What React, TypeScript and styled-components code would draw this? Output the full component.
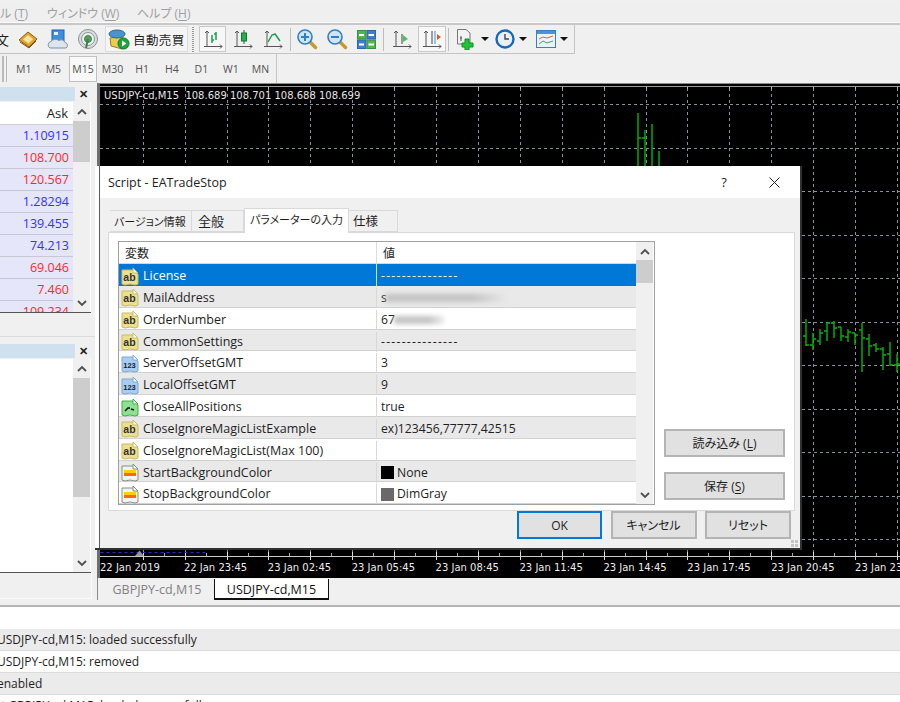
import * as React from "react";
import styled, { createGlobalStyle } from "styled-components";

const UI_FONT = `"Open Sans", "Noto Sans CJK JP", sans-serif`;

const GlobalStyle = createGlobalStyle`
  html, body {
    margin: 0;
    padding: 0;
    background: #f0f0f0;
    font-family: ${UI_FONT};
  }
`;

/* Small drawings used in the toolbars */
const BookIcon = () => (
  <svg width="20" height="20" viewBox="0 0 20 20">
    <path d="M1 11 L10 3 L19 10 L11 18 Z" fill="#e0a52c" stroke="#8a5a12" />
    <path d="M5 10.5 L10 6 L15 10 L10.5 14.5 Z" fill="#f7e2a0" />
    <path d="M2 13 L11 19 L18 12" fill="none" stroke="#7a4d10" />
  </svg>
);

const CloudIcon = () => (
  <svg width="22" height="22" viewBox="0 0 22 22">
    <rect x="5" y="2" width="12" height="11" fill="#3f8fdc" stroke="#1f5fa8" />
    <rect x="7" y="4" width="4" height="3" fill="#dff0ff" />
    <path d="M3 20 a3.5 3.5 0 0 1 1-6.5 a5 4 0 0 1 8-1 a4 4 0 0 1 6 2 a3 3 0 0 1 1 5.5 Z" fill="#dde6f0" stroke="#7d8fa5" />
  </svg>
);

const SignalIcon = () => (
  <svg width="22" height="22" viewBox="0 0 22 22">
    <circle cx="11" cy="11" r="9.5" fill="#d8dde0" stroke="#8b9296" />
    <circle cx="11" cy="11" r="6.5" fill="#eef2f2" stroke="#8b9296" />
    <circle cx="11" cy="11" r="3.5" fill="#5a9f5a" stroke="#3f7f4f" />
    <path d="M11 11 L9 20" stroke="#3f7f4f" strokeWidth="2" />
  </svg>
);

const RobotIcon = () => (
  <svg width="22" height="22" viewBox="0 0 22 22">
    <path d="M2 10 L14 8 L17 14 L14 21 L3 18 Z" fill="#eccb52" stroke="#9b8125" />
    <ellipse cx="9" cy="6" rx="8" ry="4" fill="#4b94c9" stroke="#2a6a9d" />
    <circle cx="15.5" cy="15.5" r="5.5" fill="#1da53d" stroke="#0d7a2a" />
    <path d="M14 12.5 L18.5 15.5 L14 18.5 Z" fill="#ffffff" />
  </svg>
);

const Axes = () => (
  <path d="M4 2 V18 M1 17.5 H19 M2 4 L4 2 L6 4 M17 15.5 L19 17.5 L17 19.5" fill="none" stroke="#555" />
);

const BarsIcon = () => (
  <svg width="20" height="20" viewBox="0 0 20 20">
    <Axes />
    <path d="M9 6 V14 M9 11 H11 M13 3 V11 M11 5 H13" fill="none" stroke="#16a34a" strokeWidth="1.5" />
  </svg>
);

const CandlesIcon = () => (
  <svg width="20" height="20" viewBox="0 0 20 20">
    <Axes />
    <path d="M11 1 V15" stroke="#444" />
    <rect x="8.5" y="4" width="5" height="8" fill="#22b14c" stroke="#0f7a33" />
  </svg>
);

const LineIcon = () => (
  <svg width="20" height="20" viewBox="0 0 20 20">
    <Axes />
    <path d="M5 13 L9 6 L12 5 L17 12" fill="none" stroke="#1f9d55" strokeWidth="1.5" />
  </svg>
);

const ZoomIcon = ({ plus }: { plus?: boolean }) => (
  <svg width="22" height="22" viewBox="0 0 22 22">
    <path d="M13 13 L19.5 19.5" stroke="#c79a2a" strokeWidth="3.5" strokeLinecap="round" />
    <circle cx="9" cy="9" r="7" fill="#cfe6fa" stroke="#2f7fc8" strokeWidth="1.6" />
    <path d={plus ? "M5 9 H13 M9 5 V13" : "M5 9 H13"} stroke="#2f7fc8" strokeWidth="2" />
  </svg>
);

const TilesIcon = () => (
  <svg width="19" height="19" viewBox="0 0 19 19">
    <rect x="0.5" y="0.5" width="8.5" height="8.5" fill="#4fb848" stroke="#3c8f3a" />
    <rect x="10" y="0.5" width="8.5" height="8.5" fill="#3d7fd4" stroke="#2f62a8" />
    <rect x="0.5" y="10" width="8.5" height="8.5" fill="#3d7fd4" stroke="#2f62a8" />
    <rect x="10" y="10" width="8.5" height="8.5" fill="#4fb848" stroke="#3c8f3a" />
    <path d="M2 5 H7 M11.5 5 H17 M2 14.5 H7 M11.5 14.5 H17" stroke="#fff" strokeWidth="2" />
  </svg>
);

const ShiftIcon = () => (
  <svg width="20" height="20" viewBox="0 0 20 20">
    <Axes />
    <path d="M10 5 V15" stroke="#444" />
    <path d="M11 6 L16 10 L11 13 Z" fill="#49c45a" />
  </svg>
);

const ScrollIcon = () => (
  <svg width="20" height="20" viewBox="0 0 20 20">
    <Axes />
    <path d="M10 2 V15" stroke="#444" />
    <path d="M13 2 V15" stroke="#3a8fdc" />
    <path d="M19 8 L15 5 V11 Z" fill="#e2552b" />
  </svg>
);

const NewChartIcon = () => (
  <svg width="21" height="22" viewBox="0 0 21 22">
    <path d="M1.5 1.5 H10 L14 5 V16 H1.5 Z" fill="#f2f2f2" stroke="#777" />
    <path d="M5 8 V13 M4 10 H6" stroke="#555" />
    <path d="M9 11 H13 V15 H17 V19 H13 V22 H9 V19 H6 V15 H9 Z" fill="#22c23a" stroke="#0f8f25" />
  </svg>
);

const ClockIcon = () => (
  <svg width="20" height="20" viewBox="0 0 20 20">
    <circle cx="10" cy="10" r="8.5" fill="#e8f0f6" stroke="#1668b8" strokeWidth="2.4" />
    <path d="M10 5 V10 H14" fill="none" stroke="#444" strokeWidth="1.4" />
  </svg>
);

const TemplateIcon = () => (
  <svg width="20" height="18" viewBox="0 0 20 18">
    <rect x="0.5" y="0.5" width="19" height="17" fill="#eaf3fb" stroke="#3a7fc0" />
    <rect x="1" y="1" width="18" height="3" fill="#4b93d6" />
    <path d="M3 9 L7 7 L11 8 L17 6" fill="none" stroke="#d9662b" />
    <path d="M3 14 L7 11 L11 13 L17 11" fill="none" stroke="#46a846" />
  </svg>
);

/* Page head: menu and toolbars */
const Root = styled.div`
  width: 900px;
  height: 702px;
  overflow: hidden;
  background: #f0f0f0;
  color: #1e1e1e;
  font-size: 12px;
  font-feature-settings: "palt";
  display: flex;
  flex-direction: column;
`;

const MenuBar = styled.div`
  height: 21px;
  margin-top: 2px;
  display: flex;
  align-items: center;
  color: #a0a0a0;
  font-size: 12px;
  background: #efefef;
  border-bottom: 2px solid #c8c8c8;
  box-shadow: inset 0 -1px 0 #fafafa;
  flex: none;
`;

const MenuItem = styled.span<{ $w: number }>`
  width: ${p => p.$w}px;
  white-space: nowrap;
  flex: none;
  u {
    text-underline-offset: 2px;
  }
`;

const ToolRow = styled.div`
  height: 29px;
  flex: none;
  display: flex;
  align-items: flex-start;
`;

const ToolGroup = styled.div`
  height: 28px;
  width: 574px;
  overflow: hidden;
  display: flex;
  align-items: center;
  border-right: 1px solid #c4c4c4;
  border-bottom: 1px solid #c4c4c4;
`;

const CutGlyph = styled.span`
  width: 13px;
  flex: none;
  font-size: 13px;
  text-indent: -4px;
  white-space: nowrap;
`;

const ToolButton = styled.div<{ $w: number; $gap?: number; $on?: boolean }>`
  width: ${p => p.$w}px;
  height: 26px;
  margin-left: ${p => p.$gap ?? 0}px;
  flex: none;
  box-sizing: border-box;
  display: flex;
  align-items: center;
  justify-content: center;
  gap: 4px;
  border: 1px solid ${p => (p.$on ? "#c8c8c8" : "transparent")};
  background: ${p => (p.$on ? "#f7f7f7" : "transparent")};
`;

const AutoButton = styled(ToolButton)`
  justify-content: flex-start;
  padding-left: 2px;
  gap: 3px;
  font-size: 12.5px;
  letter-spacing: 0.4px;
  white-space: nowrap;
  border-color: #dcdcdc;
  background: #f5f5f5;
`;

const Grip = styled.i`
  display: block;
  width: 2px;
  height: 25px;
  flex: none;
  margin: 0 3px 0 4px;
  background: repeating-linear-gradient(to bottom, #999 0 1px, transparent 1px 2px);
`;

const Sep = styled.i`
  display: block;
  width: 1px;
  height: 23px;
  flex: none;
  margin: 0 1px 0 2px;
  background: #bdbdbd;
`;

const Caret = styled.i`
  display: block;
  width: 0;
  height: 0;
  border-left: 4px solid transparent;
  border-right: 4px solid transparent;
  border-top: 4px solid #111;
`;

const TimeRow = styled.div`
  height: 29px;
  flex: none;
  display: flex;
`;

const TimeGroup = styled.div`
  width: 277px;
  height: 29px;
  box-sizing: border-box;
  display: flex;
  align-items: center;
  border-right: 1px solid #c4c4c4;
`;

const TimeGrips = styled.div`
  width: 9px;
  height: 26px;
  flex: none;
  background:
    linear-gradient(#bbb, #bbb) 2px 0 / 2px 100% no-repeat,
    linear-gradient(#bbb, #bbb) 6px 0 / 1px 100% no-repeat;
`;

const TimeButton = styled.div<{ $on?: boolean }>`
  width: 27.6px;
  height: 26px;
  margin: 0 1px;
  box-sizing: border-box;
  flex: none;
  display: flex;
  align-items: center;
  justify-content: center;
  font-size: 10.5px;
  color: #505050;
  border: 1px solid ${p => (p.$on ? "#c0c0c0" : "transparent")};
  background: ${p => (p.$on ? "#f8f8f8" : "transparent")};
`;

/* Middle of the terminal: side panels and chart */
const Workspace = styled.div`
  height: 517px;
  flex: none;
  display: flex;
  position: relative;
`;

const SideColumn = styled.div`
  width: 97px;
  flex: none;
  box-sizing: border-box;
  padding-top: 4px;
  display: flex;
  flex-direction: column;
`;

const PanelHead = styled.div`
  height: 15px;
  flex: none;
  width: 91px;
  display: flex;
  align-items: flex-start;
  justify-content: space-between;
`;

const PanelTitle = styled.div`
  width: 75px;
  height: 14px;
  background: #cfe0ef;
`;

const PanelClose = styled.span`
  width: 16px;
  text-align: center;
  font: bold 11px/14px "Liberation Sans", sans-serif;
  color: #222;
`;

const PanelBody = styled.div<{ $h: number }>`
  width: 91px;
  height: ${p => p.$h}px;
  flex: none;
  background: #fff;
  border-bottom: 1px solid #555;
  display: flex;
  overflow: hidden;
`;

const PanelDivider = styled.div`
  height: 31px;
  flex: none;
  box-sizing: border-box;
  padding-top: 23px;
  &::after {
    content: "";
    display: block;
    height: 1px;
    background: #dcdcdc;
  }
`;

const PanelFoot = styled.div`
  flex: 1;
  width: 92px;
  box-sizing: border-box;
  margin-bottom: 1px;
  border-right: 1px solid #fafafa;
  border-bottom: 1px solid #fafafa;
`;

const QuoteList = styled.div`
  width: 73px;
  flex: none;
`;

const QuoteHead = styled.div`
  height: 23px;
  box-sizing: border-box;
  padding-right: 5px;
  text-align: right;
  font-size: 13px;
  line-height: 22px;
  border-bottom: 1px solid #cfcfcf;
`;

const QuoteRow = styled.div<{ $down: boolean }>`
  height: 22px;
  box-sizing: border-box;
  padding-right: 4px;
  text-align: right;
  font-size: 12.5px;
  line-height: 21px;
  color: ${p => (p.$down ? "#ff2626" : "#3232ff")};
  background: #e6e6fa;
  border-bottom: 1px solid #c9c9d6;
`;

const ScrollTrack = styled.div<{ $w: number }>`
  width: ${p => p.$w}px;
  flex: none;
  background: #f0f0f0;
  display: flex;
  flex-direction: column;
  align-items: stretch;
`;

const ScrollEnd = styled.div`
  height: 18px;
  flex: none;
  display: flex;
  align-items: center;
  justify-content: center;
`;

const ScrollThumb = styled.div<{ $top: number; $h: number }>`
  height: ${p => p.$h}px;
  margin: ${p => p.$top}px 0 0;
  flex: none;
  background: #cdcdcd;
`;

const ScrollFill = styled.div`
  flex: 1;
`;

const Chevron = ({ down }: { down?: boolean }) => (
  <svg width="10" height="7" viewBox="0 0 10 7">
    <path d={down ? "M1 1 L5 5 L9 1" : "M1 6 L5 2 L9 6"} fill="none" stroke="#505050" strokeWidth="1.8" />
  </svg>
);

const Scroller = ({ w, top, h }: { w: number; top: number; h: number }) => (
  <ScrollTrack $w={w}>
    <ScrollEnd>
      <Chevron />
    </ScrollEnd>
    <ScrollThumb $top={top} $h={h} />
    <ScrollFill />
    <ScrollEnd>
      <Chevron down />
    </ScrollEnd>
  </ScrollTrack>
);

const ChartColumn = styled.div`
  flex: 1;
  min-width: 0;
  display: flex;
  flex-direction: column;
`;

const ChartFrame = styled.div`
  height: 495px;
  flex: none;
  box-sizing: border-box;
  border-left: 3px solid #6e6e6e;
  border-top: 1px solid #8a8a8a;
  background: #000;
  overflow: hidden;
`;

const ChartSvg = styled.svg`
  display: block;
`;

const ChartTabs = styled.div`
  height: 22px;
  flex: none;
  display: flex;
  padding-top: 1px;
  box-sizing: border-box;
  border-left: 1px solid #8a8a8a;
`;

const ChartTab = styled.div<{ $on?: boolean }>`
  width: ${p => (p.$on ? 115 : 116)}px;
  flex: none;
  box-sizing: border-box;
  padding-left: ${p => (p.$on ? 0 : 2)}px;
  text-align: center;
  font-size: 12.5px;
  line-height: 22px;
  color: ${p => (p.$on ? "#111" : "#808080")};
  background: ${p => (p.$on ? "#fff" : "#f0f0f0")};
  border: ${p => (p.$on ? "1px solid #111" : "none")};
  border-top: none;
  border-bottom-width: ${p => (p.$on ? 2 : 0)}px;
`;

/* Journal at the foot of the page */
const LogPanel = styled.div`
  flex: 1;
  min-height: 0;
  overflow: hidden;
  background: #fff;
  box-sizing: border-box;
  padding-top: 22px;
  margin-top: 5px;
  border-top: 2px solid #b4b4b4;
`;

const LogRow = styled.div<{ $alt: boolean; $indent: number }>`
  height: 22px;
  box-sizing: border-box;
  font-size: 12px;
  line-height: 21px;
  white-space: nowrap;
  text-indent: ${p => p.$indent}px;
  background: ${p => (p.$alt ? "#ebebeb" : "#fff")};
  border-bottom: 1px solid #dcdcdc;
`;

/* The dialog lies over the terminal */
const Dialog = styled.div`
  position: absolute;
  left: 95px;
  top: 83px;
  width: 707px;
  height: 384px;
  box-sizing: border-box;
  padding-left: 4px;
  background: #fff;
  border-right: 2px solid #303030;
  border-bottom: 2px solid #303030;
`;

const DialogInner = styled.div`
  height: 100%;
  box-sizing: border-box;
  border-left: 1px solid #5a5a5a;
  background: #f0f0f0;
  display: flex;
  flex-direction: column;
  position: relative;
`;

const TitleBar = styled.div`
  height: 32px;
  flex: none;
  display: flex;
  align-items: center;
  padding-left: 8px;
  background: #fff;
  font-size: 12.5px;
`;

const TitleText = styled.span`
  flex: 1;
`;

const TitleHelp = styled.span`
  width: 50px;
  text-align: center;
  font-size: 13px;
`;

const TitleClose = styled.span`
  width: 50px;
  margin-right: 1px;
  display: flex;
  justify-content: center;
`;

const TabStrip = styled.div`
  height: 24px;
  flex: none;
  margin-top: 10px;
  padding-left: 10px;
  display: flex;
  align-items: flex-end;
`;

const Tab = styled.div<{ $w: number; $pad: number; $size: number; $on?: boolean }>`
  width: ${p => p.$w}px;
  height: ${p => (p.$on ? 25 : 22)}px;
  margin-bottom: ${p => (p.$on ? -1 : 0)}px;
  flex: none;
  box-sizing: border-box;
  padding-left: ${p => p.$pad}px;
  font-size: ${p => p.$size}px;
  line-height: 21px;
  white-space: nowrap;
  position: relative;
  background: ${p => (p.$on ? "#fff" : "#f0f0f0")};
  border: 1px solid #d9d9d9;
  border-left-width: ${p => (p.$on ? 1 : 0)}px;
  border-bottom-width: ${p => (p.$on ? 0 : 1)}px;
`;

const TabPanel = styled.div`
  width: 687px;
  height: 279px;
  flex: none;
  margin-left: 8px;
  box-sizing: border-box;
  padding: 8px 0 0 9px;
  background: #fff;
  border: 1px solid #d9d9d9;
  display: flex;
`;

const ParamList = styled.div`
  width: 537px;
  height: 264px;
  flex: none;
  box-sizing: border-box;
  border: 1px solid #a0a0a0;
  display: flex;
  background: #fff;
`;

const ParamTable = styled.div`
  width: 517px;
  flex: none;
`;

const ParamHead = styled.div`
  height: 22px;
  display: grid;
  grid-template-columns: 258px 1fr;
  box-sizing: border-box;
  border-bottom: 1px solid #d8d8d8;
  line-height: 24px;
  font-size: 12px;
`;

const HeadCell = styled.div<{ $first?: boolean }>`
  padding-left: 6px;
  border-right: ${p => (p.$first ? "1px solid #dcdcdc" : "none")};
`;

const ParamRow = styled.div<{ $alt: boolean; $sel: boolean }>`
  height: 21.85px;
  display: grid;
  grid-template-columns: 258px 1fr;
  box-sizing: border-box;
  padding-top: 2px;
  line-height: 20px;
  color: ${p => (p.$sel ? "#fff" : "#1e1e1e")};
  background: ${p => (p.$sel ? "#0078d7" : p.$alt ? "#e9e9e9" : "#fff")};
  border-bottom: 1px solid ${p => (p.$sel ? "#0078d7" : "#d2d2d2")};
`;

const NameCell = styled.div`
  display: flex;
  align-items: center;
  gap: 4px;
  padding-left: 2px;
  font-size: 12.5px;
  box-shadow: 1px 0 0 #d8d8d8;
  margin-right: 1px;
  white-space: nowrap;
`;

const ValueCell = styled.div`
  display: flex;
  align-items: center;
  padding-left: 4px;
  font-size: 12.2px;
  white-space: nowrap;
  overflow: hidden;
`;

const Dashes = styled.span`
  letter-spacing: 1.25px;
`;

const Swatch = styled.i<{ $c: string }>`
  display: block;
  width: 13px;
  height: 13px;
  margin-right: 3px;
  background: ${p => p.$c};
`;

const Redacted = styled.span<{ $w: number }>`
  display: block;
  width: ${p => p.$w}px;
  height: 8px;
  margin-left: -1px;
  background: linear-gradient(to right, #c2c2c2 0 70%, #ececec 100%);
  filter: blur(2.5px);
`;

const SideButtons = styled.div`
  width: 121px;
  margin: 188px 0 0 9px;
  display: flex;
  flex-direction: column;
  gap: 15px;
  flex: none;
`;

const DlgButton = styled.div<{ $w?: number; $main?: boolean }>`
  width: ${p => (p.$w ? `${p.$w}px` : "100%")};
  height: 28px;
  flex: none;
  box-sizing: border-box;
  display: flex;
  align-items: center;
  justify-content: center;
  font-size: 12px;
  background: #e1e1e1;
  border: ${p => (p.$main ? "2px solid #0078d7" : "2px solid #b4b4b4")};
  u {
    text-underline-offset: 2px;
  }
`;

const DialogFoot = styled.div`
  flex: none;
  display: flex;
  justify-content: flex-end;
  gap: 8.5px;
  padding-right: 9px;
`;

const SizeGrip = styled.svg`
  position: absolute;
  right: 1px;
  bottom: 0;
`;

/* Type marks in front of each input */
const paramTheme = {
  ab: { fill: "#ece08e", stroke: "#c9bb62", label: "ab", ink: "#333" },
  num: { fill: "#a9cdf0", stroke: "#7aa8d8", label: "123", ink: "#123" },
  bool: { fill: "#8fe08f", stroke: "#3fae4f", label: "", ink: "#111" },
  color: { fill: "#f3f3f3", stroke: "#8c8c8c", label: "", ink: "#111" }
};

type ParamKind = keyof typeof paramTheme;

const ParamIcon = ({ kind }: { kind: ParamKind }) => {
  const t = paramTheme[kind];
  return (
    <svg width="18" height="19" viewBox="0 0 18 19" style={{ flex: "none" }}>
      <path d="M1 3 H12 L17 7 V17 L14 18 L9 17 L4 18 L1 17 Z" fill={t.fill} stroke={t.stroke} />
      <path d="M12 1 L17 6 H12 Z" fill="#fff" stroke={t.stroke} />
      {t.label && (
        <text
          x="8.5"
          y="13.5"
          textAnchor="middle"
          fontFamily="'Liberation Sans', sans-serif"
          fontWeight="bold"
          fontSize={kind === "ab" ? 10.5 : 7.5}
          fill={t.ink}
        >
          {t.label}
        </text>
      )}
      {kind === "bool" && <path d="M4 13 L7 10 L9 10 M10 11 L13 12" fill="none" stroke="#111" strokeWidth="1.5" />}
      {kind === "color" && (
        <>
          <rect x="3" y="7" width="12" height="3" fill="#ffd000" />
          <rect x="3" y="10" width="12" height="3" fill="#ff6a00" />
        </>
      )}
    </svg>
  );
};

const DASHES = "---------------";

type Param = { kind: ParamKind; name: string; value?: string; swatch?: string; blur?: number };

const params: Param[] = [
  { kind: "ab", name: "License", value: DASHES },
  { kind: "ab", name: "MailAddress", value: "s", blur: 125 },
  { kind: "ab", name: "OrderNumber", value: "67", blur: 50 },
  { kind: "ab", name: "CommonSettings", value: DASHES },
  { kind: "num", name: "ServerOffsetGMT", value: "3" },
  { kind: "num", name: "LocalOffsetGMT", value: "9" },
  { kind: "bool", name: "CloseAllPositions", value: "true" },
  { kind: "ab", name: "CloseIgnoreMagicListExample", value: "ex)123456,77777,42515" },
  { kind: "ab", name: "CloseIgnoreMagicList(Max 100)", value: "" },
  { kind: "color", name: "StartBackgroundColor", value: "None", swatch: "#000" },
  { kind: "color", name: "StopBackgroundColor", value: "DimGray", swatch: "#696969" }
];

const quotes: [string, boolean][] = [
  ["1.10915", false],
  ["108.700", true],
  ["120.567", true],
  ["1.28294", false],
  ["139.455", false],
  ["74.213", false],
  ["69.046", true],
  ["7.460", true],
  ["109.234", true]
];

const frames = ["M1", "M5", "M15", "M30", "H1", "H4", "D1", "W1", "MN"];

const logLines: [string, number][] = [
  ["USDJPY-cd,M15: loaded successfully", -3],
  ["USDJPY-cd,M15: removed", -3],
  ["enabled", -3],
  ["t GBPJPY-cd,M15: loaded successfully", 1]
];

const axisLabels = [
  "22 Jan 2019",
  "22 Jan 23:45",
  "23 Jan 02:45",
  "23 Jan 05:45",
  "23 Jan 08:45",
  "23 Jan 11:45",
  "23 Jan 14:45",
  "23 Jan 17:45",
  "23 Jan 20:45",
  "23 Jan 23:45"
];

/* x, high, low, open tick, close tick */
const bars: number[][] = [
  [638, 113, 170, 169, 138],
  [645, 130, 170, 138, 169],
  [652, 124, 170, 169, 169],
  [659, 151, 170, 169, 169],
  [806, 319, 346, 336, 345],
  [813, 333, 350, 345, 339],
  [820, 329, 345, 341, 333],
  [827, 322, 341, 331, 323],
  [834, 321, 338, 323, 328],
  [841, 327, 341, 327, 336],
  [848, 329, 342, 337, 332],
  [855, 333, 345, 333, 335],
  [862, 323, 372, 330, 338],
  [869, 334, 356, 339, 346],
  [876, 343, 352, 345, 349],
  [883, 347, 370, 349, 355],
  [890, 342, 366, 354, 365],
  [897, 354, 372, 365, 364]
];

const gridX = Array.from({ length: 19 }, (_, i) => Math.round(142.7 + i * 41.9) + 0.5);
const gridY = Array.from({ length: 11 }, (_, i) => Math.round(104 + i * 43.5) + 0.5);

const Chart = () => (
  <ChartSvg width="800" height="494" viewBox="100 84 800 494">
    <path d="M100 86.5 H900" stroke="#9a9a9a" />
    {gridX.map(x => (
      <g key={x}>
        <path d={`M${x} 88 V556`} stroke="#8792a0" strokeDasharray="3 3" />
        <path d={`M${x} 87 V89`} stroke="#bbb" />
        <path d={`M${x} 552 V560`} stroke="#ddd" />
        <path d={`M${x + 21} 553 V556`} stroke="#aaa" />
      </g>
    ))}
    {gridY.map(y => (
      <path key={y} d={`M100 ${y} H900`} stroke="#8792a0" strokeDasharray="3 3" />
    ))}
    <path d="M100.5 552.5 H205" stroke="#1c2fd0" strokeDasharray="3 3" />
    <path d="M135 556 L139.5 550.5 L144 556 Z" fill="#8e959c" />
    <path d="M100 556.5 H900" stroke="#c9c9c9" />
    {bars.map(([x, high, low, open, close]) => (
      <path
        key={x}
        d={`M${x} ${high} V${low} M${x - 3} ${open} H${x} M${x} ${close} H${x + 3}`}
        stroke="#00b800"
        strokeWidth="1.4"
        fill="none"
      />
    ))}
    <text x="104" y="99" fill="#e6e6e6" fontFamily="'DejaVu Sans', sans-serif" fontSize="10" xmlSpace="preserve">
      USDJPY-cd,M15  108.689 108.701 108.688 108.699
    </text>
    {axisLabels.map((label, i) => (
      <text key={label} x={100 + i * 83.9} y="571" fill="#ededed" fontFamily="'DejaVu Sans', sans-serif" fontSize="10">
        {label}
      </text>
    ))}
  </ChartSvg>
);

export default function App() {
  return (
    <Root>
      <GlobalStyle />
      <MenuBar>
        <MenuItem $w={47}>
          ル (<u>T</u>)
        </MenuItem>
        <MenuItem $w={90}>
          ウィンドウ (<u>W</u>)
        </MenuItem>
        <MenuItem $w={60}>
          ヘルプ (<u>H</u>)
        </MenuItem>
      </MenuBar>

      <ToolRow>
        <ToolGroup>
          <CutGlyph>文</CutGlyph>
          <ToolButton $w={30}>
            <BookIcon />
          </ToolButton>
          <ToolButton $w={30}>
            <CloudIcon />
          </ToolButton>
          <ToolButton $w={30}>
            <SignalIcon />
          </ToolButton>
          <AutoButton $w={83} $gap={2}>
            <RobotIcon />
            自動売買
          </AutoButton>
          <Grip />
          <ToolButton $w={27} $gap={2} $on>
            <BarsIcon />
          </ToolButton>
          <ToolButton $w={30} $gap={2}>
            <CandlesIcon />
          </ToolButton>
          <ToolButton $w={30}>
            <LineIcon />
          </ToolButton>
          <Sep />
          <ToolButton $w={30}>
            <ZoomIcon plus />
          </ToolButton>
          <ToolButton $w={29}>
            <ZoomIcon />
          </ToolButton>
          <ToolButton $w={30}>
            <TilesIcon />
          </ToolButton>
          <Sep />
          <ToolButton $w={30} $gap={2}>
            <ShiftIcon />
          </ToolButton>
          <ToolButton $w={28} $gap={1} $on>
            <ScrollIcon />
          </ToolButton>
          <Sep />
          <ToolButton $w={36} $gap={4}>
            <NewChartIcon />
            <Caret />
          </ToolButton>
          <ToolButton $w={41}>
            <ClockIcon />
            <Caret />
          </ToolButton>
          <ToolButton $w={42}>
            <TemplateIcon />
            <Caret />
          </ToolButton>
        </ToolGroup>
      </ToolRow>

      <TimeRow>
        <TimeGroup>
          <TimeGrips />
          {frames.map(f => (
            <TimeButton key={f} $on={f === "M15"}>
              {f}
            </TimeButton>
          ))}
        </TimeGroup>
      </TimeRow>

      <Workspace>
        <SideColumn>
          <PanelHead>
            <PanelTitle />
            <PanelClose>✕</PanelClose>
          </PanelHead>
          <PanelBody $h={210}>
            <QuoteList>
              <QuoteHead>Ask</QuoteHead>
              {quotes.map(([price, down]) => (
                <QuoteRow key={price} $down={down}>
                  {price}
                </QuoteRow>
              ))}
            </QuoteList>
            <Scroller w={17} top={1} h={41} />
          </PanelBody>
          <PanelDivider />
          <PanelHead>
            <PanelTitle />
            <PanelClose>✕</PanelClose>
          </PanelHead>
          <PanelBody $h={213}>
            <QuoteList />
            <Scroller w={17} top={1} h={119} />
          </PanelBody>
          <PanelFoot />
        </SideColumn>

        <ChartColumn>
          <ChartFrame>
            <Chart />
          </ChartFrame>
          <ChartTabs>
            <ChartTab>GBPJPY-cd,M15</ChartTab>
            <ChartTab $on>USDJPY-cd,M15</ChartTab>
          </ChartTabs>
        </ChartColumn>

        <Dialog>
          <DialogInner>
            <TitleBar>
              <TitleText>Script - EATradeStop</TitleText>
              <TitleHelp>?</TitleHelp>
              <TitleClose>
                <svg width="11" height="11" viewBox="0 0 11 11">
                  <path d="M0.5 0.5 L10.5 10.5 M10.5 0.5 L0.5 10.5" stroke="#222" />
                </svg>
              </TitleClose>
            </TitleBar>
            <TabStrip>
              <Tab $w={82} $pad={4} $size={11}>
                バージョン情報
              </Tab>
              <Tab $w={52} $pad={6} $size={13}>
                全般
              </Tab>
              <Tab $w={105} $pad={5} $size={11} $on>
                パラメーターの入力
              </Tab>
              <Tab $w={49} $pad={4} $size={12.5}>
                仕様
              </Tab>
            </TabStrip>
            <TabPanel>
              <ParamList>
                <ParamTable>
                  <ParamHead>
                    <HeadCell $first>変数</HeadCell>
                    <HeadCell>値</HeadCell>
                  </ParamHead>
                  {params.map((p, i) => (
                    <ParamRow key={p.name} $alt={i % 2 === 1} $sel={i === 0}>
                      <NameCell>
                        <ParamIcon kind={p.kind} />
                        {p.name}
                      </NameCell>
                      <ValueCell>
                        {p.swatch && <Swatch $c={p.swatch} />}
                        {p.value === DASHES ? <Dashes>{p.value}</Dashes> : p.value}
                        {p.blur && <Redacted $w={p.blur} />}
                      </ValueCell>
                    </ParamRow>
                  ))}
                </ParamTable>
                <Scroller w={17} top={0} h={23} />
              </ParamList>
              <SideButtons>
                <DlgButton>
                  読み込み (<u>L</u>)
                </DlgButton>
                <DlgButton>
                  保存 (<u>S</u>)
                </DlgButton>
              </SideButtons>
            </TabPanel>
            <DialogFoot>
              <DlgButton $w={85} $main>
                OK
              </DlgButton>
              <DlgButton $w={86}>キャンセル</DlgButton>
              <DlgButton $w={86}>リセット</DlgButton>
            </DialogFoot>
            <SizeGrip width="9" height="9" viewBox="0 0 9 9">
              <path d="M1 1 H4 V4 H1 Z M5 1 H8 V4 H5 Z M1 5 H4 V8 H1 Z M5 5 H8 V8 H5 Z" fill="#c4c4c4" />
            </SizeGrip>
          </DialogInner>
        </Dialog>
      </Workspace>

      <LogPanel>
        {logLines.map(([line, indent], i) => (
          <LogRow key={line} $alt={i % 2 === 0} $indent={indent}>
            {line}
          </LogRow>
        ))}
      </LogPanel>
    </Root>
  );
}
